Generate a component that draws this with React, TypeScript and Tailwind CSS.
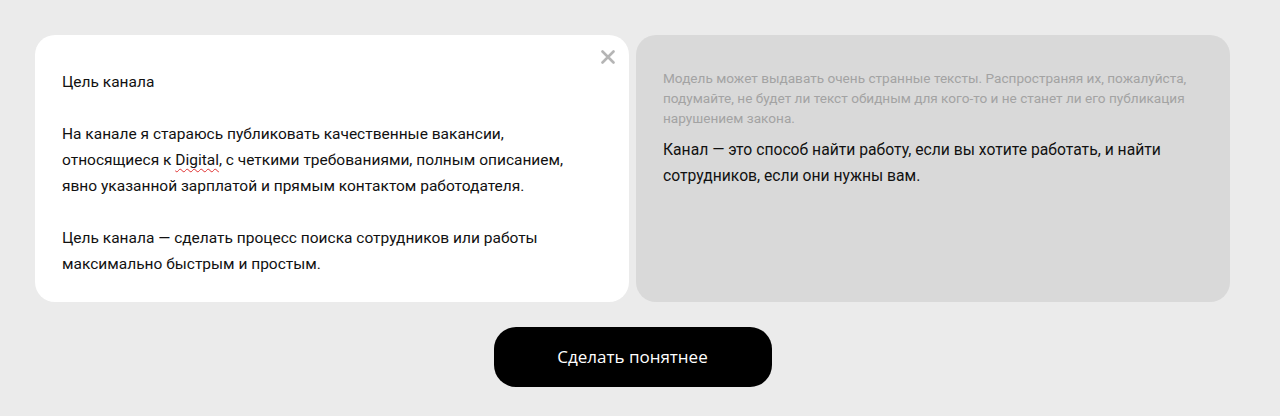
export default function App() {
  return (
    <div className="min-h-[416px] w-full bg-[#ebebeb] pt-[35px] font-['Roboto',sans-serif]">
      <div className="ml-[35px] w-[1195px]">
        <div className="flex gap-[7px]">
          {/* SOURCE TEXT */}
          <div className="relative h-[267px] w-[594px] rounded-[20px] bg-white px-[27px] pt-[34px] text-[15.5px] leading-[26px] text-[#111]">
            <button
              type="button"
              aria-label="Закрыть"
              className="absolute right-[14px] top-[15px] flex h-[14px] w-[14px] items-center justify-center">
              <svg width="14" height="14" viewBox="0 0 14 14" fill="none">
                <path d="M1.5 1.5l11 11M12.5 1.5l-11 11" stroke="#b5b5b5" strokeWidth="2.6" strokeLinecap="round" />
              </svg>
            </button>
            <p>Цель канала</p>
            <p className="mt-[26px]">
              На канале я стараюсь публиковать качественные вакансии,
              <br />
              относящиеся к{' '}
              <span className="underline decoration-wavy decoration-[#e03030] decoration-1 underline-offset-[3px]">Digital</span>
              , с четкими требованиями, полным описанием,
              <br />
              явно указанной зарплатой и прямым контактом работодателя.
            </p>
            <p className="mt-[26px]">
              Цель канала — сделать процесс поиска сотрудников или работы
              <br />
              максимально быстрым и простым.
            </p>
          </div>

          {/* RESULT */}
          <div className="h-[267px] w-[594px] rounded-[20px] bg-[#d9d9d9] px-[27px] pt-[33px]">
            <p className="text-[13.6px] leading-[20px] text-[#a3a3a3]">
              Модель может выдавать очень странные тексты. Распространяя их, пожалуйста,
              <br />
              подумайте, не будет ли текст обидным для кого-то и не станет ли его публикация
              <br />
              нарушением закона.
            </p>
            <p className="mt-[9px] text-[15.7px] leading-[26px] text-[#111]">
              Канал — это способ найти работу, если вы хотите работать, и найти
              <br />
              сотрудников, если они нужны вам.
            </p>
          </div>
        </div>

        <div className="mt-[25px] flex justify-center">
          <button
            type="button"
            className="h-[60px] w-[278px] rounded-[22px] bg-black font-['Open_Sans',sans-serif] text-[17px] font-medium text-white">
            Сделать понятнее
          </button>
        </div>
      </div>
    </div>
  );
}
